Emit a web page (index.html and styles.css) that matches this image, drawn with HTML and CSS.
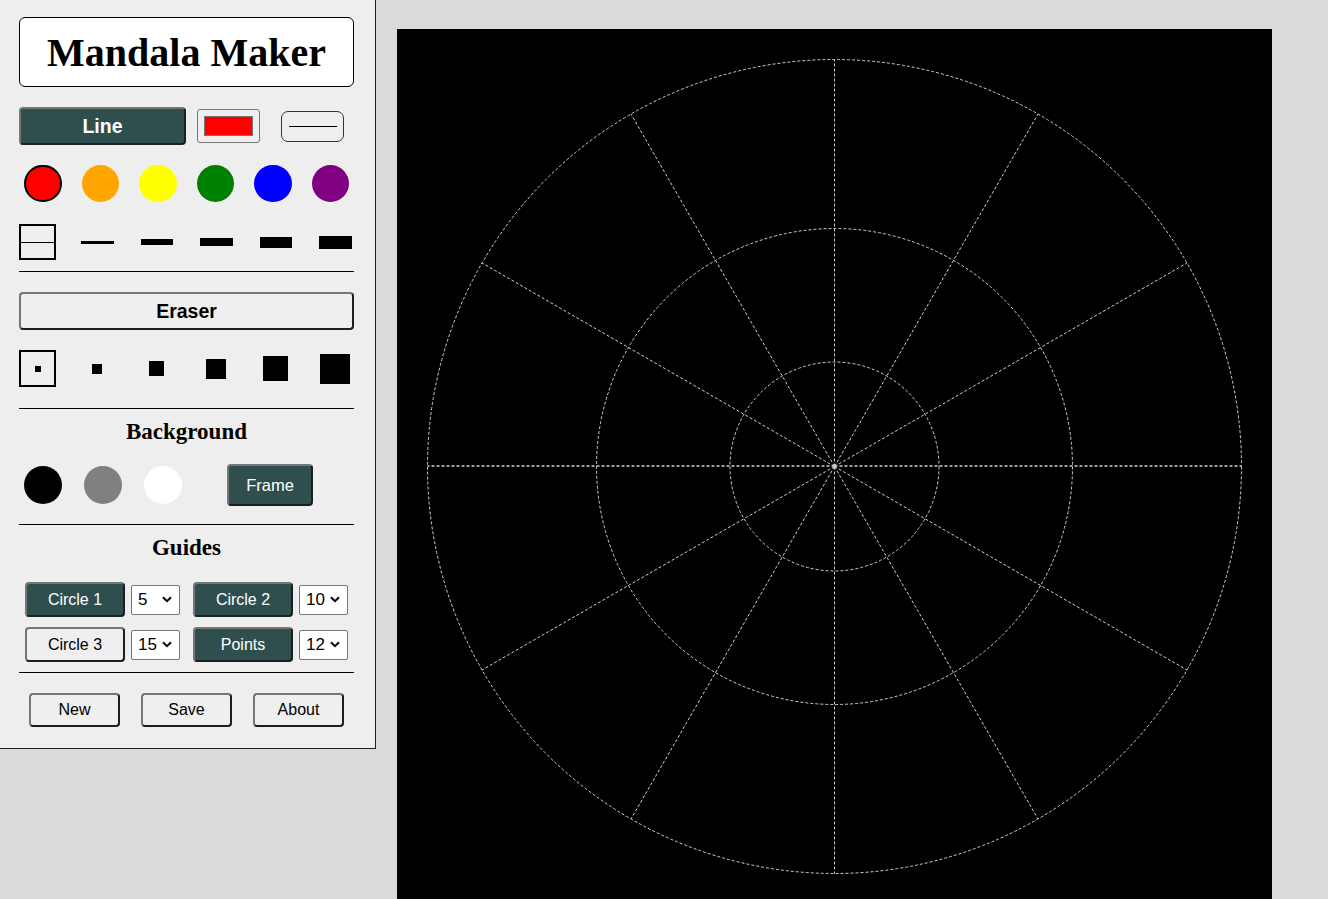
FILE: index.html
```html
<!DOCTYPE html>
<html lang="en">
<head>
<meta charset="utf-8">
<title>Mandala Maker</title>
<link rel="stylesheet" href="styles.css">
</head>
<body>
<aside class="panel">
  <div class="title">Mandala Maker</div>

  <div class="tool-row">
    <button class="btn dark line-btn">Line</button>
    <div class="picker"><span class="picker-swatch"></span></div>
    <button class="linestyle"><span class="linestyle-line"></span></button>
  </div>

  <div class="swatches">
    <span class="sw sel" style="background:#ff0000"></span>
    <span class="sw" style="background:#ffa500"></span>
    <span class="sw" style="background:#ffff00"></span>
    <span class="sw" style="background:#008000"></span>
    <span class="sw" style="background:#0000ff"></span>
    <span class="sw" style="background:#800080"></span>
  </div>

  <div class="sizes">
    <span class="cell sel"><span class="bar" style="width:33px;height:1px"></span></span>
    <span class="cell"><span class="bar" style="width:33px;height:3px"></span></span>
    <span class="cell"><span class="bar" style="width:32px;height:6px"></span></span>
    <span class="cell"><span class="bar" style="width:33px;height:8px"></span></span>
    <span class="cell"><span class="bar" style="width:32px;height:11px"></span></span>
    <span class="cell"><span class="bar" style="width:33px;height:13px"></span></span>
  </div>

  <div class="sep sep1"></div>

  <button class="btn light eraser">Eraser</button>

  <div class="sizes erasers">
    <span class="cell sel"><span class="bar" style="width:6px;height:6px"></span></span>
    <span class="cell"><span class="bar" style="width:10px;height:10px"></span></span>
    <span class="cell"><span class="bar" style="width:15px;height:15px"></span></span>
    <span class="cell"><span class="bar" style="width:20px;height:20px"></span></span>
    <span class="cell"><span class="bar" style="width:25px;height:25px"></span></span>
    <span class="cell"><span class="bar" style="width:30px;height:30px"></span></span>
  </div>

  <div class="sep sep2"></div>

  <h2 class="heading">Background</h2>
  <div class="bg-row">
    <span class="bg-sw" style="background:#000000"></span>
    <span class="bg-sw" style="background:#808080"></span>
    <span class="bg-sw" style="background:#ffffff"></span>
    <button class="btn dark frame">Frame</button>
  </div>

  <div class="sep sep3"></div>

  <h2 class="heading">Guides</h2>
  <div class="guides">
    <div class="grow">
      <div class="pair">
        <button class="btn dark gbtn">Circle 1</button>
        <div class="sel-box"><span>5</span><svg class="chev" width="10" height="7" viewBox="0 0 10 7"><polyline points="1,1.2 5,5.2 9,1.2" fill="none" stroke="#000" stroke-width="2"/></svg></div>
      </div>
      <div class="pair">
        <button class="btn dark gbtn">Circle 2</button>
        <div class="sel-box"><span>10</span><svg class="chev" width="10" height="7" viewBox="0 0 10 7"><polyline points="1,1.2 5,5.2 9,1.2" fill="none" stroke="#000" stroke-width="2"/></svg></div>
      </div>
    </div>
    <div class="grow">
      <div class="pair">
        <button class="btn light gbtn">Circle 3</button>
        <div class="sel-box"><span>15</span><svg class="chev" width="10" height="7" viewBox="0 0 10 7"><polyline points="1,1.2 5,5.2 9,1.2" fill="none" stroke="#000" stroke-width="2"/></svg></div>
      </div>
      <div class="pair">
        <button class="btn dark gbtn">Points</button>
        <div class="sel-box"><span>12</span><svg class="chev" width="10" height="7" viewBox="0 0 10 7"><polyline points="1,1.2 5,5.2 9,1.2" fill="none" stroke="#000" stroke-width="2"/></svg></div>
      </div>
    </div>
  </div>

  <div class="sep sep4"></div>

  <div class="actions">
    <button class="btn light act">New</button>
    <button class="btn light act">Save</button>
    <button class="btn light act">About</button>
  </div>
</aside>

<main class="canvas">
  <svg class="mandala" width="875" height="875" viewBox="0 0 875 875">
    <g fill="none" stroke="#cfcfcf" stroke-width="1" stroke-dasharray="3 2">
      <circle cx="437.5" cy="437.5" r="104.5"/>
      <circle cx="437.5" cy="437.5" r="238"/>
      <circle cx="437.5" cy="437.5" r="407"/>
      <line x1="437.5" y1="437.5" x2="437.5" y2="30.5"/>
      <line x1="437.5" y1="437.5" x2="641" y2="85.03"/>
      <line x1="437.5" y1="437.5" x2="789.97" y2="234"/>
      <line x1="437.5" y1="437" x2="844.5" y2="437" stroke-width="1.6"/>
      <line x1="437.5" y1="437.5" x2="789.97" y2="641"/>
      <line x1="437.5" y1="437.5" x2="641" y2="789.97"/>
      <line x1="437.5" y1="437.5" x2="437.5" y2="844.5"/>
      <line x1="437.5" y1="437.5" x2="234" y2="789.97"/>
      <line x1="437.5" y1="437.5" x2="85.03" y2="641"/>
      <line x1="437.5" y1="437" x2="30.5" y2="437" stroke-width="1.6"/>
      <line x1="437.5" y1="437.5" x2="85.03" y2="234"/>
      <line x1="437.5" y1="437.5" x2="234" y2="85.03"/>
    </g>
  </svg>
</main>
</body>
</html>
```

FILE: styles.css
```css
html, body {
  margin: 0;
  padding: 0;
  overflow: hidden;
}

body {
  background: #dcdadc;
  display: flex;
  align-items: flex-start;
  font-family: "Liberation Sans", Arial, sans-serif;
  color: #000;
}

.panel {
  flex: none;
  width: 335px;
  padding: 17px 21px 21px 19px;
  background: #eeeeee;
  border-right: 1px solid #1e1e1e;
  border-bottom: 1px solid #1e1e1e;
  display: flex;
  flex-direction: column;
}

.title {
  box-sizing: border-box;
  height: 70px;
  background: #fff;
  border: 1px solid #000;
  border-radius: 6px;
  display: flex;
  align-items: center;
  justify-content: center;
  font-family: "Liberation Serif", "Times New Roman", serif;
  font-weight: bold;
  font-size: 40px;
}

/* generic buttons */
.btn {
  box-sizing: border-box;
  margin: 0;
  padding: 0;
  border: 2px solid;
  border-color: #767676 #1e1e1e #1e1e1e #767676;
  border-radius: 4px;
  font-family: "Liberation Sans", Arial, sans-serif;
  font-size: 16px;
  display: flex;
  align-items: center;
  justify-content: center;
}

.btn.dark {
  background: #2f4f4f;
  color: #fff;
}

.btn.light {
  background: #efefef;
  color: #000;
}

/* tool row */
.tool-row {
  margin-top: 20px;
  height: 38px;
  display: flex;
  align-items: center;
}

.line-btn {
  width: 167px;
  height: 38px;
  font-size: 19.5px;
  font-weight: bold;
}

.picker {
  box-sizing: border-box;
  margin-left: 11px;
  width: 63px;
  height: 34px;
  padding: 6px;
  background: #efefef;
  border: 1px solid #767676;
  border-radius: 3px;
  display: flex;
}

.picker-swatch {
  flex: 1;
  background: #ff0000;
  border: 1px solid #777;
}

.linestyle {
  box-sizing: border-box;
  margin: 0 0 0 21px;
  padding: 0;
  width: 63px;
  height: 31px;
  background: transparent;
  border: 1px solid #333;
  border-radius: 7px;
  display: flex;
  align-items: center;
  justify-content: center;
}

.linestyle-line {
  width: 48px;
  height: 1px;
  background: #000;
}

/* colour swatches */
.swatches {
  margin-top: 19.5px;
  display: flex;
  justify-content: space-between;
}

.sw {
  box-sizing: border-box;
  width: 37.5px;
  height: 37.5px;
  margin: 0 5px;
  border-radius: 50%;
}

.sw.sel {
  border: 2px solid #000;
}

/* size rows */
.sizes {
  margin-top: 22px;
  height: 36px;
  display: flex;
  justify-content: space-between;
  align-items: center;
}

.cell {
  box-sizing: border-box;
  width: 37px;
  height: 36px;
  display: flex;
  align-items: center;
  justify-content: center;
}

.cell.sel {
  border: 2px solid #000;
}

.bar {
  display: block;
  background: #000;
}

.erasers {
  margin-top: 20px;
  height: 37px;
}

.erasers .cell {
  height: 37px;
}

/* separators */
.sep {
  height: 1px;
  background: #000;
}

.sep1 { margin-top: 11px; }
.sep2 { margin-top: 21px; }
.sep3 { margin-top: 18px; }
.sep4 { margin-top: 10px; }

.eraser {
  margin-top: 20px;
  width: 100%;
  height: 38px;
  font-size: 19.5px;
  font-weight: bold;
}

.heading {
  margin: 9px 0 0;
  font-family: "Liberation Serif", "Times New Roman", serif;
  font-weight: bold;
  font-size: 23px;
  line-height: 28px;
  text-align: center;
}

/* background row */
.bg-row {
  margin-top: 18px;
  height: 42px;
  padding-left: 5px;
  display: flex;
  align-items: center;
  gap: 22px;
}

.bg-sw {
  width: 38px;
  height: 38px;
  border-radius: 50%;
}

.frame {
  margin-left: 23px;
  width: 86px;
  height: 42px;
  font-size: 16.5px;
}

/* guides */
.guides {
  margin-top: 20px;
  display: flex;
  flex-direction: column;
  gap: 10px;
}

.grow {
  height: 35px;
  display: flex;
  justify-content: center;
  align-items: center;
  gap: 13px;
}

.pair {
  display: flex;
  align-items: center;
  gap: 6px;
}

.gbtn {
  width: 100px;
  height: 35px;
}

.sel-box {
  box-sizing: border-box;
  width: 49px;
  height: 30px;
  padding: 0 7px 0 6px;
  background: #fff;
  border: 1px solid #767676;
  border-radius: 2px;
  display: flex;
  align-items: center;
  justify-content: space-between;
  font-size: 17px;
}

.chev {
  display: block;
}

/* actions */
.actions {
  margin-top: 20px;
  display: flex;
  justify-content: center;
  gap: 21px;
}

.act {
  width: 91px;
  height: 34px;
}

/* canvas */
.canvas {
  flex: none;
  width: 875px;
  height: 875px;
  margin: 29px 0 0 21px;
  background: #000;
}

.mandala {
  display: block;
}
```
